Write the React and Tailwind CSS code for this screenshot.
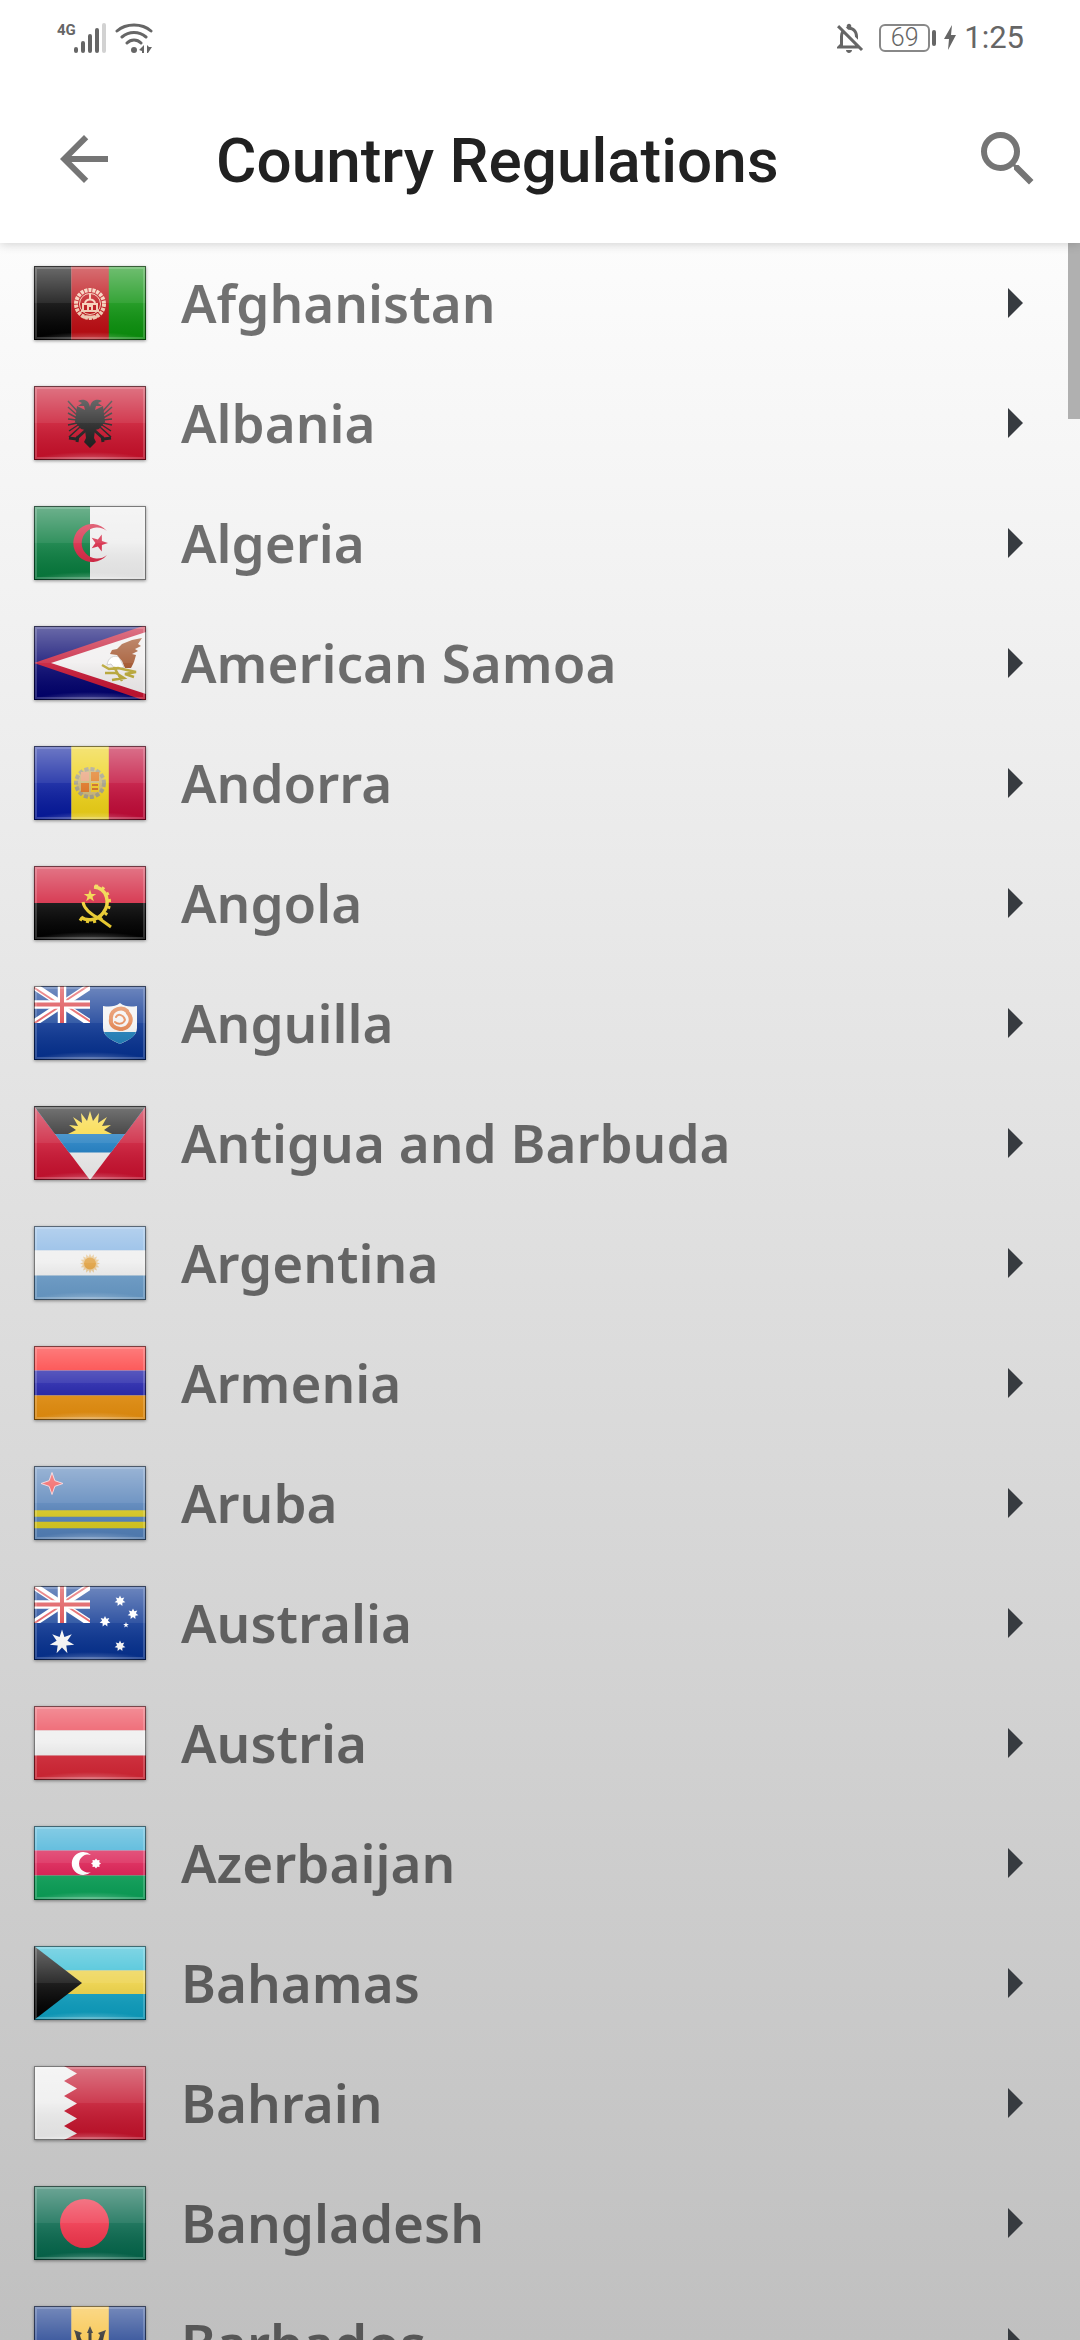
import React from 'react';
import { MdArrowBack, MdOutlineNotificationsOff, MdSearch } from 'react-icons/md';

const starPoints = (cx, cy, outer, inner, count, turn = -90) =>
  Array.from({ length: count * 2 }, (_, i) => {
    const r = i % 2 ? inner : outer;
    const a = ((turn + (i * 180) / count) * Math.PI) / 180;
    return `${(cx + r * Math.cos(a)).toFixed(2)},${(cy + r * Math.sin(a)).toFixed(2)}`;
  }).join(' ');

function Star({ x, y, r, inner = r * 0.4, n = 5, turn, ...rest }) {
  return <polygon points={starPoints(x, y, r, inner, n, turn)} {...rest} />;
}

function Bands({ colors, stops = [0, 24.5, 49.5, 74] }) {
  return colors.map((c, i) => (
    <rect key={c} y={stops[i]} width="112" height={stops[i + 1] - stops[i]} fill={c} />
  ));
}

function Pales({ colors }) {
  return colors.map((c, i) => <rect key={i} x={i * 37.4} width="37.6" height="74" fill={c} />);
}

function UnionJack() {
  return (
    <svg width="56" height="37" viewBox="0 0 56 37">
      <rect width="56" height="37" fill="#0b3a94" />
      <path d="M0 0L56 37M56 0L0 37" stroke="#fff" strokeWidth="7" />
      <path d="M-1 1L28 20M57 -2L28 17M-1 38L28 19M57 36L28 17" stroke="#e0484c" strokeWidth="2" />
      <path d="M28 0V37M0 18.500H56" stroke="#fff" strokeWidth="8.500" />
      <path d="M28 0V37M0 18.500H56" stroke="#d8353a" strokeWidth="4" />
    </svg>
  );
}

const FLAGS = {
  Afghanistan: (
    <>
      <Pales colors={['#000', '#bb0a10', '#0a900c']} />
      <g fill="none" stroke="#f6cdb4">
        <circle cx="56" cy="38" r="14" strokeWidth="4" strokeDasharray="3 1" />
        <circle cx="56" cy="38" r="10.500" strokeWidth="1" />
        <path d="M49 44V38H63V44M51 38C51 32 61 32 61 38M56 28V33M47 45H65M54 44V40H58V44" strokeWidth="2" />
      </g>
      <path d="M49 51H63" stroke="#f6cdb4" strokeWidth="3" />
    </>
  ),
  Albania: (
    <>
      <rect width="112" height="74" fill="#c8102a" />
      <g stroke="#1c1c1c" strokeWidth="1.500" fill="none">
        <path d="M44 26L34 15M43 29L34 21M43 32L34 27M43 34L34 33M43 37L34 39M44 39L35 45M46 41L35 51M68 26L78 15M69 29L78 21M69 32L78 27M69 34L78 33M69 37L78 39M68 39L77 45M66 41L77 51" />
        <path d="M52 44L42 53L35 52M44 50L43 56M60 44L70 53L77 52M68 50L69 56" strokeWidth="3" />
      </g>
      <path
        d="M56 21C55 14 49 12 44 15L48 17L44 20L50 20L51 24L43 20L41 36L47 43L51 44L52 52L50 56L56 62L62 56L60 52L61 44L65 43L71 36L69 20L61 24L62 20L68 20L64 17L68 15C63 12 57 14 56 21Z"
        fill="#1c1c1c"
      />
    </>
  ),
  Algeria: (
    <>
      <rect width="112" height="74" fill="#ededed" />
      <rect width="56" height="74" fill="#067a3c" />
      <path d="M73 25A19 19 0 1 0 73 49A15.500 15.500 0 1 1 73 25Z" fill="#d4213f" />
      <Star x={65} y={37} r={9} turn={0} fill="#d4213f" />
    </>
  ),
  'American Samoa': (
    <>
      <rect width="112" height="74" fill="#00006b" />
      <path d="M0 37L112 -1V75Z" fill="#c41230" />
      <path d="M17 37L112 6V68Z" fill="#f0eeee" />
      <path d="M73 39C74 31 80 29 85 31L90 41L82 44L77 38Z" fill="#fff" stroke="#c9c9c9" strokeWidth="1" />
      <path d="M108 12L98 14L88 18L83 23L78 24L76 28L83 29L88 35L91 42L97 42L100 36L102 29L98 28L104 25L101 23L107 20L104 18Z" fill="#9c4a20" />
      <path d="M68 39L75 43L84 42L102 46L91 48L100 51M71 47L82 47L90 52L78 54M80 41L88 55" fill="none" stroke="#b9a632" strokeWidth="2.500" />
    </>
  ),
  Andorra: (
    <>
      <Pales colors={['#05189c', '#edd015', '#c00a37']} />
      <circle cx="56" cy="37" r="14" fill="#c9b370" stroke="#a09a80" strokeWidth="4" strokeDasharray="4 2" />
      <rect x="47" y="26" width="8" height="9" fill="#e8a07a" />
      <rect x="57" y="26" width="8" height="9" fill="#e0791e" />
      <rect x="47" y="37" width="8" height="9" fill="#dd701c" />
      <rect x="57" y="37" width="8" height="9" fill="#edc51b" />
      <path d="M58 39H64M58 43H64" stroke="#c0481c" strokeWidth="1.500" />
    </>
  ),
  Angola: (
    <>
      <rect width="112" height="37" fill="#cf1330" />
      <rect y="37" width="112" height="37" fill="#000" />
      <g fill="none" stroke="#efcf2a">
        <path d="M60 21C73 22 77 37 69 47C64 54 53 56 47 51" strokeWidth="3.500" />
        <path d="M61 20C75 20 80 38 71 49C65 57 52 58 45 52" strokeWidth="3" strokeDasharray="3 4" />
        <path d="M49 36C50 43 58 49 66 53L77 61" strokeWidth="3" />
      </g>
      <Star x={56} y={30} r={6.5} fill="#efcf2a" />
    </>
  ),
  Anguilla: (
    <>
      <rect width="112" height="74" fill="#05308f" />
      <UnionJack />
      <path d="M69 20C75 21 81 21 86 17C91 21 97 21 103 20V42C103 50 95 54 86 58C77 54 69 50 69 42Z" fill="#f3f3f3" />
      <path d="M70 46H102C100 52 94 54 86 58C78 54 72 52 70 46Z" fill="#1b7cb8" />
      <g fill="none" stroke="#e3824c" strokeWidth="4" strokeLinecap="round">
        <path d="M77 31C78 23 88 20 93 25" />
        <path d="M94 27C100 34 95 42 88 43" />
        <path d="M86 43C79 42 76 38 77 33" />
        <path d="M82 31C84 27 90 29 91 34C89 39 83 38 81 36" strokeWidth="2" />
      </g>
    </>
  ),
  'Antigua and Barbuda': (
    <>
      <rect width="112" height="74" fill="#c8102e" />
      <path d="M0 0H112L56 74Z" fill="#ededed" />
      <path d="M0 0H112L77 46.500H35Z" fill="#1677bd" />
      <path d="M0 0H112L91 28H21Z" fill="#111" />
      <path d="M34 28L42 24L35 19L44 20L39 11L48 17L47 7L53 15L56 5L59 15L65 7L64 17L73 11L68 20L77 19L70 24L78 28Z" fill="#f8d52e" />
    </>
  ),
  Argentina: (
    <>
      <Bands colors={['#7fb0e2', '#ededed', '#699bc8']} />
      <Star x={56} y={37.5} r={10} inner={7} n={16} fill="#e6c795" />
      <circle cx="56" cy="37.500" r="6" fill="#df9d39" />
    </>
  ),
  Armenia: <Bands colors={['#fc2020', '#1c1ca6', '#e58e0e']} />,
  Aruba: (
    <>
      <rect width="112" height="74" fill="#527fb7" />
      <path d="M0 47.500H112M0 59H112" stroke="#d9c81c" strokeWidth="6.500" />
      <Star x={18} y={17.5} r={11} inner={4} n={4} fill="#f04444" stroke="#f3c9d0" strokeWidth="1" />
    </>
  ),
  Australia: (
    <>
      <rect width="112" height="74" fill="#05308f" />
      <UnionJack />
      <g fill="#fff">
        <Star x={28} y={56} r={12.5} inner={5.5} n={7} />
        <Star x={86} y={15} r={5.5} inner={3} n={7} />
        <Star x={99} y={28} r={5.5} inner={3} n={7} />
        <Star x={71} y={35.5} r={5.5} inner={3} n={7} />
        <Star x={92} y={39} r={3} />
        <Star x={86} y={60} r={5.5} inner={3} n={7} />
      </g>
    </>
  ),
  Austria: <Bands colors={['#ea3d4c', '#ededed', '#d32534']} />,
  Azerbaijan: (
    <>
      <Bands colors={['#2fa8d3', '#d9174d', '#0aa057']} />
      <path d="M57 29A11.500 11.500 0 1 0 57 46A9 9 0 1 1 57 29Z" fill="#fff" />
      <Star x={62} y={37.5} r={5} inner={3.5} n={8} fill="#fff" />
    </>
  ),
  Bahamas: (
    <>
      <Bands colors={['#27b8d2', '#ebcf3f', '#0c9dbe']} stops={[0, 24.5, 48, 74]} />
      <path d="M0 0L48 37L0 74Z" fill="#000" />
    </>
  ),
  Bahrain: (
    <>
      <rect width="112" height="74" fill="#c2112a" />
      <path d="M0 0H30L43 7.500L30 15L43 22.500L30 30L43 37.500L30 45L43 52.500L30 60L43 67.500L30 74H0Z" fill="#ededed" />
    </>
  ),
  Bangladesh: (
    <>
      <rect width="112" height="74" fill="#04654a" />
      <circle cx="50.500" cy="37.500" r="24.500" fill="#ee2f46" />
    </>
  ),
  Barbados: (
    <>
      <Pales colors={['#123589', '#f7bd33', '#123589']} />
      <path d="M56 20L59 27H57.500V52H54.500V27H53Z" fill="#111" />
      <path d="M40 24L48 27L46 29C47 34 49 38 56 39C63 38 65 34 66 29L64 27L72 24C69 31 69 38 66 44H46C43 38 43 31 40 24ZM47 34L49 41H54V38ZM65 34L63 41H58V38Z" fill="#111" fillRule="evenodd" />
    </>
  ),
};

// Shared gradients for the glossy finish on every flag
function GlossDefs() {
  return (
    <svg className="absolute size-0" aria-hidden="true">
      <defs>
        <linearGradient id="gloss-top" x1="0" y1="0" x2="0" y2="1">
          <stop offset="0" stopColor="#fff" stopOpacity="0.42" />
          <stop offset="1" stopColor="#fff" stopOpacity="0.18" />
        </linearGradient>
        <linearGradient id="gloss-shade" x1="0" y1="0" x2="0" y2="1">
          <stop offset="0" stopColor="#fff" stopOpacity="0.12" />
          <stop offset="1" stopColor="#000" stopOpacity="0.06" />
        </linearGradient>
        <radialGradient id="gloss-glow" cx="0.5" cy="1" r="0.5">
          <stop offset="0" stopColor="#fff" stopOpacity="0.3" />
          <stop offset="1" stopColor="#fff" stopOpacity="0" />
        </radialGradient>
      </defs>
    </svg>
  );
}

function Flag({ country }) {
  return (
    <svg viewBox="0 0 112 74" className="w-28 h-[74px] shrink-0 shadow-[0_1px_3px_rgba(0,0,0,0.4)]" aria-hidden="true">
      {FLAGS[country]}
      <rect width="112" height="37" fill="url(#gloss-top)" />
      <rect y="37" width="112" height="37" fill="url(#gloss-shade)" />
      <rect y="58" width="112" height="16" fill="url(#gloss-glow)" />
      <rect x="2" y="2" width="108" height="70" fill="none" stroke="#fff" strokeOpacity="0.18" strokeWidth="2" />
      <rect x="0.500" y="0.500" width="111" height="73" fill="none" stroke="#000" strokeOpacity="0.5" />
    </svg>
  );
}

function StatusBar() {
  return (
    <div className="flex h-[75px] items-center justify-between pl-[57px] pr-[56px] text-[#666]">
      <div className="flex h-[30px] items-start">
        <span className="w-[17px] text-[15px] leading-[15px] font-bold">4G</span>
        <svg width="32" height="30" viewBox="0 0 32 30" fill="none" strokeWidth="4" strokeLinecap="round" aria-hidden="true">
          <path d="M2 26V28M9 20V28M16 13V28M23 7V28" stroke="#666" />
          <path d="M30 2V28" stroke="#d2d2d2" />
        </svg>
        <svg width="38" height="30" viewBox="0 0 38 30" className="ml-[9px]" fill="none" stroke="#666" strokeWidth="3" strokeLinecap="round" aria-hidden="true">
          <path d="M2 8C11 0 27 0 36 8M7 14C14 8 24 8 31 14M12 20C16 16 22 16 26 20" />
          <circle cx="19" cy="27" r="3" fill="#666" stroke="none" />
          <path d="M29 22V30H27V28L24 27ZM32 22V30H33L37 24H34Z" fill="#666" stroke="none" />
        </svg>
      </div>
      <div className="flex items-center">
        <MdOutlineNotificationsOff className="size-9" />
        <div className="ml-3 flex h-7 w-[51px] items-center justify-center rounded-md border-2 border-[#888] text-[25px] leading-none font-light">
          69
        </div>
        <span className="ml-[2px] h-4 w-1 rounded-full bg-[#666]" />
        <svg width="12" height="25" viewBox="0 0 12 25" className="ml-2 mr-2" aria-hidden="true">
          <path d="M8 0L0 14H5L4 25L12 10H7Z" fill="#666" />
        </svg>
        <span className="text-[31px] leading-none">1:25</span>
      </div>
    </div>
  );
}

function CountryRow({ country }) {
  return (
    <li>
      <a href="#" className="flex h-[120px] items-center pl-[34px] pr-[57px]">
        <Flag country={country} />
        <span className="flex-1 pl-[35px] pb-[2px] font-['Noto_Sans',sans-serif] text-[53px] leading-none font-semibold whitespace-nowrap text-black/55">
          {country}
        </span>
        <svg width="15" height="30" viewBox="0 0 15 30" aria-hidden="true">
          <path d="M0 0L15 15L0 30Z" fill="#373b40" />
        </svg>
      </a>
    </li>
  );
}

export default function App() {
  return (
    <div className="flex h-screen flex-col overflow-hidden bg-white font-['Roboto',sans-serif]">
      <GlossDefs />
      <header className="relative z-10 bg-white shadow-[0_1px_10px_rgba(0,0,0,0.18)]">
        <StatusBar />
        <div className="flex h-[168px] items-center pl-12 pr-9 text-[#757575]">
          <button type="button" aria-label="Back">
            <MdArrowBack className="size-[72px]" />
          </button>
          <h1 className="flex-1 pt-1 pl-24 text-[62px] leading-none font-medium text-[#212121]">Country Regulations</h1>
          <button type="button" aria-label="Search">
            <MdSearch className="size-[72px]" />
          </button>
        </div>
      </header>
      <main className="relative min-h-0 flex-1 overflow-hidden bg-linear-to-b from-[#fcfcfc] to-[#c0c0c0]">
        <ul>
          {Object.keys(FLAGS).map((country) => (
            <CountryRow key={country} country={country} />
          ))}
        </ul>
        <div className="absolute top-0 right-0 h-44 w-3 bg-[#b0b0b0]" />
      </main>
    </div>
  );
}
